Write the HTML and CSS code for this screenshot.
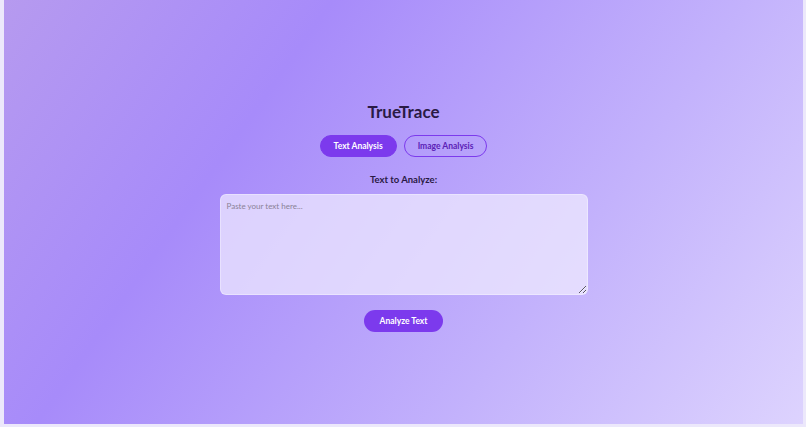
FILE: index.html
```html
<!DOCTYPE html>
<html lang="en">
<head>
<meta charset="utf-8">
<title>TrueTrace</title>
<link rel="stylesheet" href="styles.css">
</head>
<body>
<main class="app">
  <h1 class="title">TrueTrace</h1>
  <div class="tabs">
    <button class="tab tab-active">Text Analysis</button>
    <button class="tab">Image Analysis</button>
  </div>
  <label class="label" for="txt">Text to Analyze:</label>
  <textarea id="txt" class="input" placeholder="Paste your text here..."></textarea>
  <button class="analyze">Analyze Text</button>
</main>
</body>
</html>
```

FILE: styles.css
```css
html {
  background: #ece8fb;
}
body {
  margin: 0 3px 3px 4px;
  font-family: Lato, "Noto Sans", sans-serif;
}
.app {
  height: 424px;
  box-sizing: border-box;
  background: linear-gradient(125deg, #b69aef 0%, #a78bfa 30%, #c3b2fc 68%, #ddd3fe 100%);
  display: flex;
  flex-direction: column;
  align-items: center;
  padding-top: 101px;
}
.title {
  margin: 0;
  font-size: 17px;
  line-height: 22px;
  font-weight: 700;
  color: #2a1a45;
}
.tabs {
  display: flex;
  gap: 7px;
  margin-top: 12px;
}
.tab {
  height: 22px;
  padding: 0 13px;
  border-radius: 11px;
  border: 1px solid #7c3aed;
  background: transparent;
  color: #5b21b6;
  font-family: inherit;
  font-size: 8.5px;
  font-weight: 700;
}
.tab-active {
  background: #7c3aed;
  color: #fff;
}
.label {
  margin-top: 17px;
  font-size: 9.5px;
  line-height: 12px;
  font-weight: 700;
  color: #2a1a45;
}
.input {
  margin-top: 8px;
  width: 368px;
  height: 101px;
  box-sizing: border-box;
  border: 1px solid rgba(255, 255, 255, 0.35);
  border-radius: 6px;
  background: rgba(240, 236, 255, 0.72);
  padding: 6px 6px;
  font-family: inherit;
  font-size: 8px;
  color: #333;
  resize: vertical;
}
.input::placeholder {
  color: #8a8296;
}
.analyze {
  margin-top: 15px;
  height: 22px;
  padding: 0 16px;
  border: none;
  border-radius: 11px;
  background: #7c3aed;
  color: #fff;
  font-family: inherit;
  font-size: 8.5px;
  font-weight: 700;
}
```
